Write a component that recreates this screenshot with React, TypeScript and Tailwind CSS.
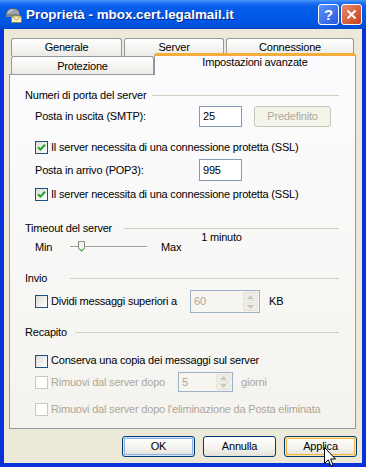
import React from 'react';

// Windows XP style "Proprietà" dialog for a mail account

const Checkbox = ({ checked = false, disabled = false }: { checked?: boolean; disabled?: boolean }) => (
  <span
    className={
      disabled
        ? 'flex h-[13px] w-[13px] shrink-0 items-center justify-center border border-[#CAC8BB] bg-white'
        : 'flex h-[13px] w-[13px] shrink-0 items-center justify-center border border-[#1C5180] bg-[linear-gradient(135deg,#DCDCD7,#FFFFFF)]'
    }
  >
    {checked && (
      <svg width="9" height="9" viewBox="0 0 9 9">
        <path d="M1 4.2 L3.4 6.6 L8 1.8" fill="none" stroke="#21A121" strokeWidth="2" />
      </svg>
    )}
  </span>
);

const GroupHeader = ({ label, width }: { label: string; width: string }) => (
  <div className="flex h-[14px] items-center pl-[15px] pr-[16px]">
    <span className={`${width} shrink-0 whitespace-nowrap`}>{label}</span>
    <div className="h-px flex-1 bg-[#D0D0BF]" />
  </div>
);

const SpinBox = ({ value, width }: { value: string; width: string }) => (
  <div className={`${width} flex h-full items-center border border-[#9DAFC9] bg-[#F6F5F0] pl-[3px] text-[#ACA899]`}>
    <span className="flex-1">{value}</span>
    <div className="mr-[1px] flex h-[calc(100%-2px)] w-[15px] flex-col gap-px">
      <div className="flex flex-1 items-center justify-center rounded-[2px] border border-[#E2E1D9] bg-[#EFEEE7]">
        <svg width="7" height="4" viewBox="0 0 7 4">
          <path d="M0 4 L3.5 0 L7 4 Z" fill="#CAC8BB" />
        </svg>
      </div>
      <div className="flex flex-1 items-center justify-center rounded-[2px] border border-[#E2E1D9] bg-[#EFEEE7]">
        <svg width="7" height="4" viewBox="0 0 7 4">
          <path d="M0 0 L3.5 4 L7 0 Z" fill="#CAC8BB" />
        </svg>
      </div>
    </div>
  </div>
);

const XpButton = ({ label, ring }: { label: string; ring?: 'blue' | 'orange' }) => {
  let cls =
    'flex h-[21px] w-[73px] items-center justify-center rounded-[3px] border border-[#003C74] bg-[linear-gradient(180deg,#FFFFFF_0%,#F3F2EE_60%,#E3E0D7_100%)]';
  if (ring === 'blue') cls += ' shadow-[inset_0_0_0_1px_#CEE7FF,inset_0_0_0_2px_#8DB2E3]';
  if (ring === 'orange') cls += ' shadow-[inset_0_0_0_1px_#FFE8A8,inset_0_0_0_2px_#F5B342]';
  return <div className={cls}>{label}</div>;
};

const tabs1 = [
  { name: 'Generale', w: 'w-[111px]' },
  { name: 'Server', w: 'w-[100px]' },
  { name: 'Connessione', w: 'w-[128px]' },
];

export default function App() {
  return (
    <div className="relative flex h-[467px] w-[366px] flex-col bg-[#0831D9] font-['Liberation_Sans',Arial,sans-serif] text-[11px] leading-[13px] tracking-[-0.2px] text-black">
      {/* Title bar */}
      <div className="flex h-[29px] shrink-0 items-center bg-[linear-gradient(180deg,#4A98FA_0%,#2272F2_10%,#065DEA_25%,#0058E8_60%,#0053E0_85%,#0048CC_100%)] pl-[5px] pr-[4px]">
        <svg width="17" height="16" viewBox="0 0 17 16" className="shrink-0">
          <path d="M1 8 C1 3 5 1.5 8 1.5 C11 1.5 15 3 15 8 Z" fill="#9AA4AE" stroke="#4A5560" strokeWidth="0.8" />
          <path d="M3 6 C4 4 6 3 8 3" fill="none" stroke="#E8EDF2" strokeWidth="1" />
          <rect x="1" y="8" width="14" height="2" fill="#7C8690" />
          <rect x="6.5" y="9" width="10" height="6.5" fill="#FFF4B8" stroke="#8A7A30" strokeWidth="0.8" />
          <path d="M6.5 9 L11.5 13 L16.5 9" fill="none" stroke="#8A7A30" strokeWidth="0.8" />
        </svg>
        <span className="ml-[4px] flex-1 whitespace-nowrap text-[13.4px] font-bold tracking-normal text-white [text-shadow:1px_1px_0_#0A2A8A]">
          Proprietà - mbox.cert.legalmail.it
        </span>
        <div className="flex h-[21px] w-[21px] items-center justify-center rounded-[3px] border border-white bg-[linear-gradient(135deg,#5E93F8,#2459E0)] text-[15px] font-bold text-white">
          ?
        </div>
        <div className="ml-[2px] flex h-[21px] w-[21px] items-center justify-center rounded-[3px] border border-white bg-[linear-gradient(135deg,#E98A6C,#C8401C)]">
          <svg width="11" height="11" viewBox="0 0 11 11">
            <path d="M1.5 1.5 L9.5 9.5 M9.5 1.5 L1.5 9.5" stroke="white" strokeWidth="2" />
          </svg>
        </div>
      </div>

      {/* Body */}
      <div className="mx-[4px] mb-[4px] flex flex-1 flex-col bg-[#ECE9D8] pt-[9px]">
        {/* Tabs */}
        <div className="ml-[7px] flex h-[18px]">
          {tabs1.map((t) => (
            <div
              key={t.name}
              className={`${t.w} mr-[2px] flex items-start justify-center rounded-t-[3px] border border-b-0 border-[#919B9C] bg-[linear-gradient(180deg,#FFFFFF,#ECEBE6)] pt-[2px]`}
            >
              {t.name}
            </div>
          ))}
        </div>
        <div className="ml-[7px] flex h-[18px]">
          <div className="flex w-[143px] items-start justify-center rounded-t-[3px] border border-b-0 border-[#919B9C] bg-[linear-gradient(180deg,#FFFFFF,#ECEBE6)] pt-[3px]">
            Protezione
          </div>
          <div className="relative z-10 -mt-[3px] flex h-[22px] w-[202px] items-start justify-center rounded-t-[3px] border-x border-t-[3px] border-x-[#919B9C] border-t-[#F4AC3B] bg-[#FCFCFE]">
            Impostazioni avanzate
          </div>
        </div>

        {/* Tab panel */}
        <div className="ml-[5px] flex h-[355px] w-[347px] flex-col border border-[#919B9C] bg-[linear-gradient(180deg,#FCFCFE,#F4F3EE)]">
          <div className="mt-[13px]">
            <GroupHeader label="Numeri di porta del server" width="w-[127px]" />
          </div>
          <div className="mt-[4px] flex h-[21px] items-center pl-[25px]">
            <span className="w-[164px]">Posta in uscita (SMTP):</span>
            <div className="flex h-full w-[43px] items-center border border-[#7F9DB9] bg-white pl-[3px]">25</div>
            <div className="ml-[12px] flex h-full w-[77px] items-center justify-center rounded-[3px] border border-[#C9C7BA] bg-[#F5F4EA] text-[#ACA899]">
              Predefinito
            </div>
          </div>
          <div className="mt-[13px] flex h-[14px] items-center gap-[3px] pl-[25px]">
            <Checkbox checked />
            <span>Il server necessita di una connessione protetta (SSL)</span>
          </div>
          <div className="mt-[5px] flex h-[22px] items-center pl-[25px]">
            <span className="w-[164px]">Posta in arrivo (POP3):</span>
            <div className="flex h-full w-[43px] items-center border border-[#7F9DB9] bg-white pl-[3px]">995</div>
          </div>
          <div className="mt-[6px] flex h-[14px] items-center gap-[3px] pl-[25px]">
            <Checkbox checked />
            <span>Il server necessita di una connessione protetta (SSL)</span>
          </div>

          <div className="mt-[20px]">
            <GroupHeader label="Timeout del server" width="w-[99px]" />
          </div>
          <div className="flex h-[18px] pl-[25px]">
            <div className="flex h-[12px] items-center self-end">
              <span className="w-[35px]">Min</span>
              <div className="relative flex w-[77px] items-center">
                <div className="h-[2px] w-full border-t border-[#9D9C99] bg-white" />
                <svg width="7" height="11" viewBox="0 0 7 11" className="absolute left-[8px] top-[-5px]">
                  <path d="M0.5 0.5 H6.5 V7.5 L3.5 10.5 L0.5 7.5 Z" fill="#F3F3EF" stroke="#8A8A85" />
                  <path d="M1.5 7.8 L3.5 9.6 L5.5 7.8" fill="none" stroke="#21C221" strokeWidth="1" />
                </svg>
              </div>
              <span className="ml-[14px]">Max</span>
            </div>
            <span className="-mt-[4px] ml-[20px] self-start">1 minuto</span>
          </div>

          <div className="mt-[18px]">
            <GroupHeader label="Invio" width="w-[45px]" />
          </div>
          <div className="mt-[5px] flex h-[23px] items-center pl-[25px]">
            <Checkbox />
            <span className="ml-[3px] w-[139px]">Dividi messaggi superiori a</span>
            <SpinBox value="60" width="w-[70px]" />
            <span className="ml-[9px]">KB</span>
          </div>

          <div className="mt-[12px]">
            <GroupHeader label="Recapito" width="w-[50px]" />
          </div>
          <div className="mt-[15px] flex h-[14px] items-center gap-[3px] pl-[25px]">
            <Checkbox />
            <span className="-mt-[2px]">Conserva una copia dei messaggi sul server</span>
          </div>
          <div className="mt-[4px] flex h-[20px] items-center pl-[25px] text-[#ACA899]">
            <Checkbox disabled />
            <span className="ml-[3px] w-[127px]">Rimuovi dal server dopo</span>
            <SpinBox value="5" width="w-[55px]" />
            <span className="ml-[8px]">giorni</span>
          </div>
          <div className="mt-[10px] flex h-[14px] items-center gap-[3px] pl-[25px] text-[#ACA899]">
            <Checkbox disabled />
            <span>Rimuovi dal server dopo l'eliminazione da Posta eliminata</span>
          </div>
        </div>

        {/* Dialog buttons */}
        <div className="mt-[7px] flex justify-end gap-[8px] pr-[5px]">
          <XpButton label="OK" ring="blue" />
          <XpButton label="Annulla" />
          <XpButton label="Applica" ring="orange" />
        </div>
      </div>

      {/* Mouse pointer */}
      <svg width="12" height="20" viewBox="0 0 12 20" className="absolute left-[324px] top-[447px]">
        <path d="M0.5 0.5 V16.5 L4.3 12.8 L6.8 18.8 L9 17.8 L6.6 12 H11.5 Z" fill="white" stroke="black" strokeWidth="1" />
      </svg>
    </div>
  );
}
